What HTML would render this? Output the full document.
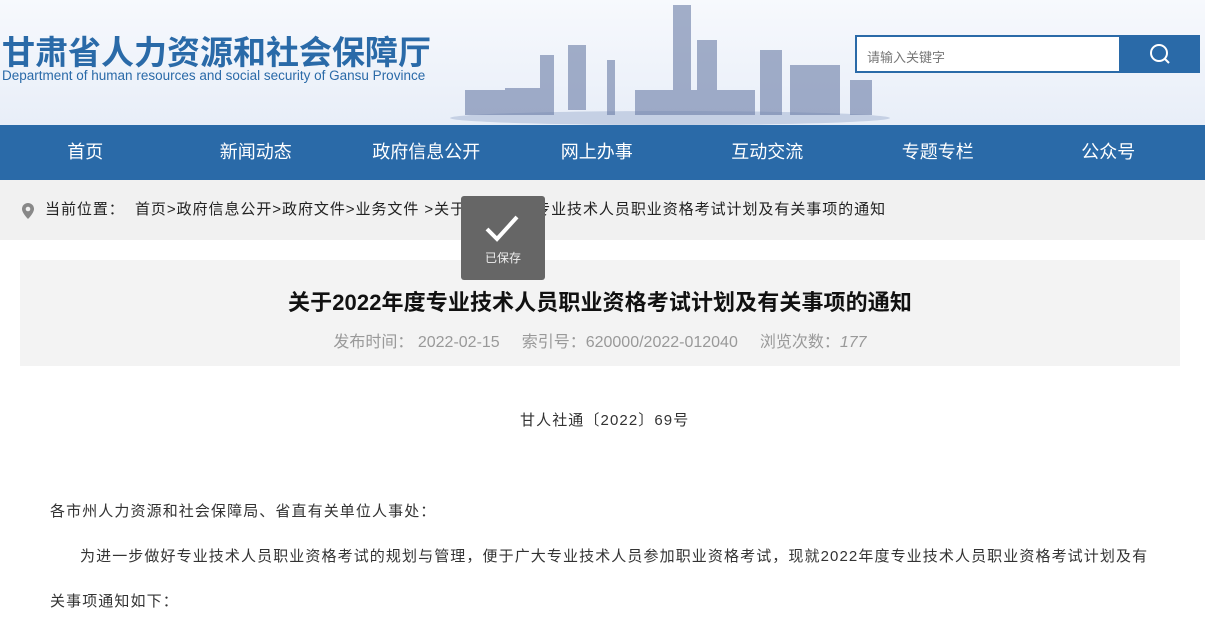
<!DOCTYPE html>
<html><head><meta charset="utf-8"><style>
*{margin:0;padding:0;box-sizing:border-box}
body{width:1205px;height:618px;overflow:hidden;background:#fff;font-family:"Liberation Sans","Noto Sans CJK SC",sans-serif;position:relative}
.hdr{position:absolute;left:0;top:0;width:1205px;height:125px;background:linear-gradient(180deg,#f7f9fd,#e8eef8)}
.logo{position:absolute;left:2px;top:26px;font-size:33px;font-weight:bold;color:#2a6aa8;white-space:nowrap}
.en{position:absolute;left:2px;top:68px;font-size:13.5px;color:#2a6aa8;white-space:nowrap}
.city{position:absolute;left:445px;top:0;width:450px;height:125px}
.search{position:absolute;left:855px;top:35px;width:266px;height:38px;border:2px solid #2a6aa8;background:#fff;font-size:13px;color:#777;padding:10px 10px}
.sbtn{position:absolute;left:1120px;top:35px;width:80px;height:38px;background:#2a6aa8}
.nav{position:absolute;left:0;top:125px;width:1205px;height:55px;background:#2a6aa8;display:flex}
.nav div{width:170.5px;text-align:center;color:#fff;font-size:18px;line-height:55px}
.bc{position:absolute;left:0;top:180px;width:1205px;height:60px;background:#f1f1f1;font-size:15px;color:#222;line-height:60px;padding-left:45px;letter-spacing:0.95px;white-space:nowrap}
.box{position:absolute;left:20px;top:260px;width:1160px;height:106px;background:#f3f3f3;text-align:center}
.box h1{font-size:22px;font-weight:bold;color:#111;margin-top:25px;white-space:nowrap;letter-spacing:0.1px}
.meta{font-size:16px;color:#999;margin-top:11px;white-space:nowrap}
.meta span{margin:0 11px}
.toast{position:absolute;left:461px;top:196px;width:84px;height:84px;background:#666;border-radius:3px;color:#eee;font-size:12px;text-align:center}
.p{position:absolute;font-size:15px;color:#333;letter-spacing:1.1px;white-space:nowrap}
</style></head><body>
<div class="hdr"></div>
<div class="logo">甘肃省人力资源和社会保障厅</div>
<div class="en">Department of human resources and social security of Gansu Province</div>
<svg class="city" viewBox="0 0 450 125">
<ellipse cx="225" cy="118" rx="220" ry="7" fill="#c5d0e4"/>
<g fill="#6a7ca6" opacity="0.6">
<rect x="95" y="55" width="14" height="60"/><rect x="60" y="88" width="40" height="27"/>
<rect x="123" y="45" width="18" height="65"/><rect x="162" y="60" width="8" height="55"/>
<rect x="228" y="5" width="18" height="105"/>
<rect x="252" y="40" width="20" height="75"/><rect x="315" y="50" width="22" height="65"/>
<rect x="345" y="65" width="50" height="50"/><rect x="405" y="80" width="22" height="35"/>
<rect x="190" y="90" width="120" height="25"/><rect x="20" y="90" width="40" height="25"/>
</g></svg>
<div class="search">请输入关键字</div>
<div class="sbtn"><svg width="80" height="38"><circle cx="39" cy="18" r="8" fill="none" stroke="#fff" stroke-width="2"/><line x1="45" y1="24" x2="49" y2="28" stroke="#fff" stroke-width="2"/></svg></div>
<div class="nav"><div>首页</div><div>新闻动态</div><div>政府信息公开</div><div>网上办事</div><div>互动交流</div><div>专题专栏</div><div>公众号</div></div>
<div class="bc"><svg style="position:absolute;left:22px;top:23px" width="12" height="16"><path d="M6 0a6 6 0 0 0-6 6c0 4 6 10 6 10s6-6 6-10a6 6 0 0 0-6-6z" fill="#888"/><circle cx="6" cy="6" r="2.3" fill="#f1f1f1"/></svg>当前位置：&nbsp; 首页&gt;政府信息公开&gt;政府文件&gt;业务文件 &gt;关于2022年度专业技术人员职业资格考试计划及有关事项的通知</div>
<div class="box"><h1>关于2022年度专业技术人员职业资格考试计划及有关事项的通知</h1>
<div class="meta"><span>发布时间： 2022-02-15</span><span>索引号：620000/2022-012040</span><span>浏览次数：<i>177</i></span></div></div>
<div class="toast"><svg width="84" height="50"><path d="M26 33l10 10 20-22" fill="none" stroke="#fff" stroke-width="4"/></svg><div>已保存</div></div>
<div class="p" style="left:520px;top:409px">甘人社通〔2022〕69号</div>
<div class="p" style="left:50px;top:500px">各市州人力资源和社会保障局、省直有关单位人事处：</div>
<div class="p" style="left:80px;top:545px">为进一步做好专业技术人员职业资格考试的规划与管理，便于广大专业技术人员参加职业资格考试，现就2022年度专业技术人员职业资格考试计划及有</div>
<div class="p" style="left:50px;top:590px">关事项通知如下：</div>
</body></html>
